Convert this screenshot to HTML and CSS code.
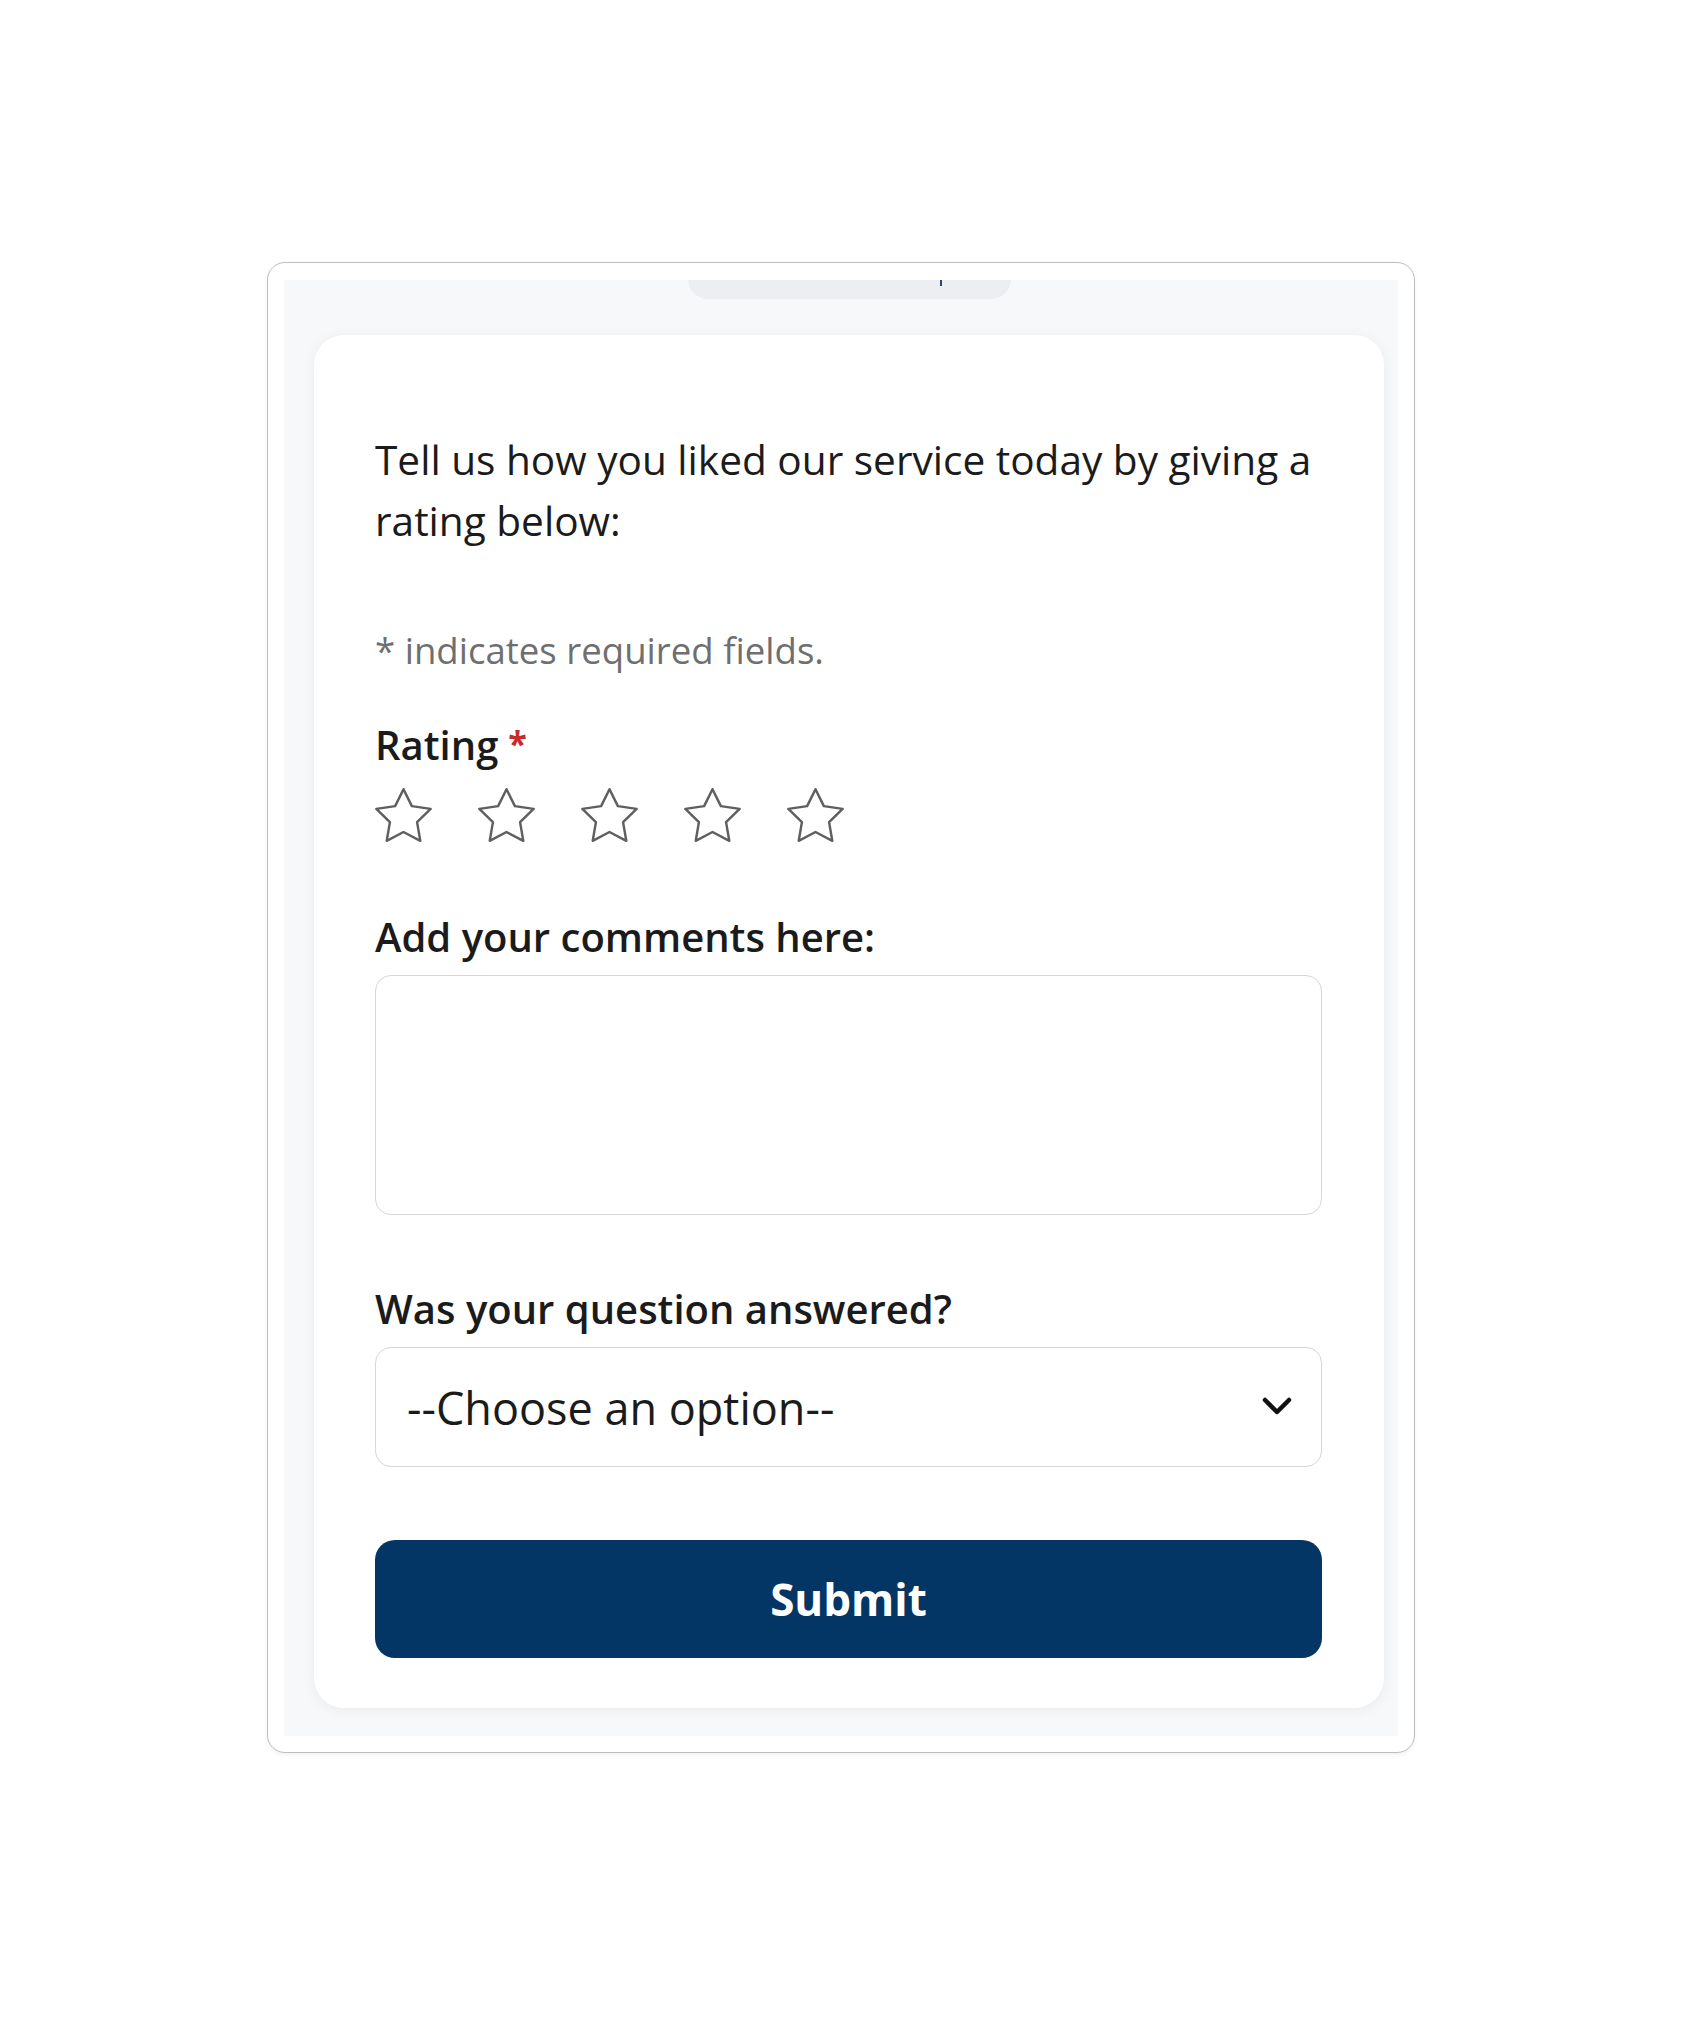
FILE: index.html
```html
<!DOCTYPE html>
<html lang="en">
<head>
<meta charset="utf-8">
<title>Feedback</title>
<link rel="stylesheet" href="styles.css">
</head>
<body>
<div class="page">
  <div class="frame">
    <div class="panel">
      <div class="pill"><span class="caret"></span></div>
      <form class="card">
        <p class="intro">Tell us how you liked our service today by giving a rating below:</p>
        <p class="note">* indicates required fields.</p>
        <div class="field field-rating">
          <div class="label">Rating<span class="req">*</span></div>
          <div class="stars">
            <svg class="star" viewBox="1.5 1.2 21 21"><polygon points="12 2 15.09 8.26 22 9.27 17 14.14 18.18 21.02 12 17.77 5.82 21.02 7 14.14 2 9.27 8.91 8.26 12 2"/></svg>
            <svg class="star" viewBox="1.5 1.2 21 21"><polygon points="12 2 15.09 8.26 22 9.27 17 14.14 18.18 21.02 12 17.77 5.82 21.02 7 14.14 2 9.27 8.91 8.26 12 2"/></svg>
            <svg class="star" viewBox="1.5 1.2 21 21"><polygon points="12 2 15.09 8.26 22 9.27 17 14.14 18.18 21.02 12 17.77 5.82 21.02 7 14.14 2 9.27 8.91 8.26 12 2"/></svg>
            <svg class="star" viewBox="1.5 1.2 21 21"><polygon points="12 2 15.09 8.26 22 9.27 17 14.14 18.18 21.02 12 17.77 5.82 21.02 7 14.14 2 9.27 8.91 8.26 12 2"/></svg>
            <svg class="star" viewBox="1.5 1.2 21 21"><polygon points="12 2 15.09 8.26 22 9.27 17 14.14 18.18 21.02 12 17.77 5.82 21.02 7 14.14 2 9.27 8.91 8.26 12 2"/></svg>
          </div>
        </div>
        <div class="field field-comments">
          <label class="label" for="comments">Add your comments here:</label>
          <textarea id="comments" class="textarea"></textarea>
        </div>
        <div class="field field-question">
          <div class="label">Was your question answered?</div>
          <div class="select">
            <span class="select-text">--Choose an option--</span>
            <svg class="chevron" viewBox="0 0 30 20"><polyline points="3,3 15,15 27,3"/></svg>
          </div>
        </div>
        <button type="button" class="submit">Submit</button>
      </form>
    </div>
  </div>
</div>
</body>
</html>
```
FILE: styles.css
```css
html, body {
  margin: 0;
  padding: 0;
  background: #ffffff;
}

body {
  font-family: "Open Sans", "Noto Sans", "Liberation Sans", sans-serif;
  color: #1b1b1b;
}

.page {
  padding-top: 262px;
  padding-bottom: 200px;
}

.frame {
  box-sizing: border-box;
  width: 1148px;
  margin: 0 auto;
  border: 1px solid #bdbdbd;
  border-radius: 18px;
  padding: 17px 16px 16px 16px;
  background: #ffffff;
  box-shadow: 0 2px 4px rgba(0, 0, 0, 0.06);
}

.panel {
  background: #f7f8fa;
  overflow: hidden;
  padding: 0 14px 28px 30px;
}

.pill {
  position: relative;
  width: 323px;
  height: 40px;
  margin: -21px auto 0;
  background: #eceef1;
  border-radius: 20px;
}

.caret {
  position: absolute;
  left: 252px;
  top: 21px;
  width: 2px;
  height: 6px;
  background: #1d4a78;
}

.card {
  margin-top: 36px;
  background: #ffffff;
  border-radius: 30px;
  padding: 94px 62px 50px 61px;
  box-shadow: 0 2px 14px rgba(0, 0, 0, 0.06);
  display: flex;
  flex-direction: column;
}

.intro {
  margin: 0;
  font-size: 40.6px;
  line-height: 61px;
  color: #1b1b1b;
}

.note {
  margin: 74px 0 0;
  font-size: 36.6px;
  line-height: 50px;
  color: #6f6f6f;
}

.field {
  display: flex;
  flex-direction: column;
}

.field-rating {
  margin-top: 43px;
  gap: 17px;
}

.field-comments {
  margin-top: 68px;
  gap: 13px;
}

.field-question {
  margin-top: 69px;
  gap: 13px;
}

.label {
  display: block;
  font-size: 40px;
  line-height: 50px;
  font-weight: 600;
  color: #1b1b1b;
}

.req {
  color: #c62a2a;
  font-size: 34px;
  font-weight: 700;
  margin-left: 10px;
  vertical-align: 4px;
}

.stars {
  display: flex;
  gap: 46px;
  height: 57px;
}

.star {
  width: 57px;
  height: 57px;
  fill: none;
  stroke: #5f5f5f;
  stroke-width: 0.9;
  stroke-linejoin: round;
}

.textarea {
  box-sizing: border-box;
  display: block;
  width: 100%;
  height: 240px;
  margin: 0;
  border: 1px solid #d6d6d6;
  border-radius: 16px;
  background: #ffffff;
  resize: none;
  font-family: inherit;
  font-size: 36px;
}

.select {
  box-sizing: border-box;
  height: 120px;
  border: 1px solid #d6d6d6;
  border-radius: 16px;
  background: #ffffff;
  display: flex;
  align-items: center;
  justify-content: space-between;
  padding: 0 29px 0 31px;
}

.select-text {
  font-size: 45px;
  color: #1b1b1b;
}

.chevron {
  width: 30px;
  height: 20px;
  fill: none;
  stroke: #111111;
  stroke-width: 4.5;
  stroke-linecap: round;
  stroke-linejoin: round;
}

.submit {
  margin-top: 73px;
  height: 118px;
  width: 100%;
  border: none;
  border-radius: 20px;
  background: #033664;
  color: #ffffff;
  font-family: inherit;
  font-size: 44px;
  font-weight: 700;
  cursor: pointer;
}
```
